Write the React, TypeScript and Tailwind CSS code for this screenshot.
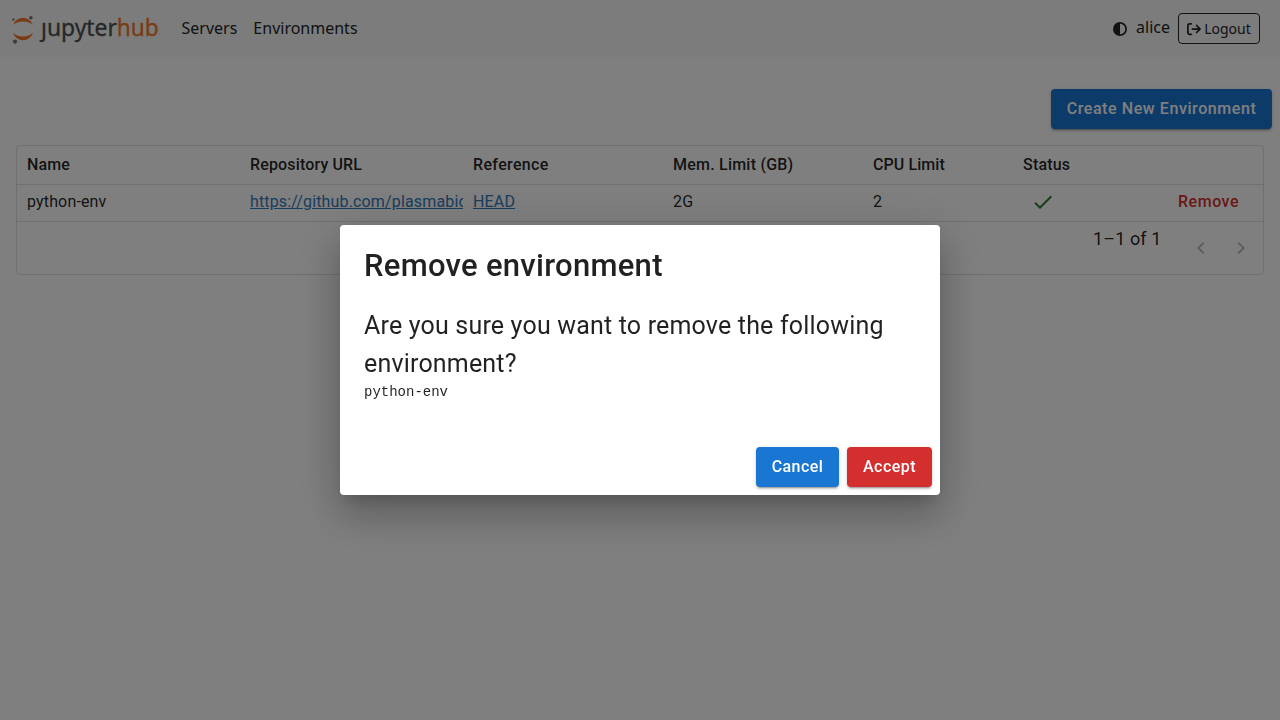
import { FaArrowRightFromBracket, FaCircleHalfStroke } from "react-icons/fa6";

const columns = "grid grid-cols-[223px_223px_200px_200px_150px_1fr]";
const buttonBase =
  "flex h-10 items-center justify-center rounded-[4px] text-base font-medium text-white shadow-[0_3px_1px_-2px_rgba(0,0,0,0.2),0_2px_2px_0_rgba(0,0,0,0.14),0_1px_5px_0_rgba(0,0,0,0.12)]";

function Logo() {
  return (
    <svg className="overflow-visible" width="148" height="33" viewBox="0 0 148 33" role="img" aria-label="jupyterhub">
      <path d="M2 13C3.800 8.600 7.500 6 12 6s8.200 2.600 10 7C19.800 10.700 16.200 9.500 12 9.500S4.200 10.700 2 13Z" fill="#f37726" />
      <path d="M2 20.800C3.800 25.500 7.500 28.200 12 28.200s8.200-2.700 10-7.400C19.800 23.200 16.200 24.500 12 24.500S4.200 23.200 2 20.800Z" fill="#f37726" />
      <circle cx="19.900" cy="5.700" r="1.800" fill="#767677" />
      <circle cx="2.400" cy="7.600" r="1.200" fill="#767677" />
      <circle cx="4" cy="29.600" r="2.100" fill="#767677" />
      <g fontFamily="'Noto Sans', sans-serif" fontSize="23">
        <text x="30" y="23.500" textLength="76" lengthAdjust="spacingAndGlyphs" fill="#4e4e4e" stroke="#4e4e4e" strokeWidth="0.300">
          ȷupyter
        </text>
        <text x="105.800" y="23.500" textLength="42" lengthAdjust="spacingAndGlyphs" fill="#f37726" stroke="#f37726" strokeWidth="0.300">
          hub
        </text>
      </g>
    </svg>
  );
}

function Navbar() {
  return (
    <header className="flex h-[57px] items-center bg-[#f8f9fa] pr-5 pl-[11px] font-['Noto_Sans',sans-serif] text-base text-[#212529]">
      <Logo />
      <nav className="mb-0.5 ml-[22.500px] flex gap-4">
        <a>Servers</a>
        <a>Environments</a>
      </nav>
      <div className="ml-auto flex items-center">
        <FaCircleHalfStroke className="size-3.5" />
        <span className="mr-2 mb-[3px] ml-[9px]">alice</span>
        <button className="flex h-[31px] w-[82px] items-center justify-center gap-[3px] rounded-[4px] border border-[#212529] text-sm">
          <FaArrowRightFromBracket className="size-3.5" />
          Logout
        </button>
      </div>
    </header>
  );
}

function Chevron({ d }: { d: string }) {
  return (
    <svg className="size-6 fill-black/26" viewBox="0 0 24 24">
      <path d={d} />
    </svg>
  );
}

function EnvironmentTable() {
  return (
    <section className="mx-4 mt-4 h-[130px] rounded-[4px] border border-[#e0e0e0] tracking-[0.150px]">
      <div className={`${columns} h-[39px] items-center border-b border-[#e0e0e0] font-medium`}>
        <div className="px-2.5">Name</div>
        <div className="px-2.5">Repository URL</div>
        <div className="px-2.5 tracking-[0.350px]">Reference</div>
        <div className="px-2.5 tracking-[0.220px]">Mem. Limit (GB)</div>
        <div className="px-2.5 tracking-[0.080px]">CPU Limit</div>
        <div className="px-2.5 tracking-[0.200px]">Status</div>
      </div>
      <div className={`${columns} h-[37px] items-center border-b border-[#e0e0e0] pb-0.5`}>
        <div className="px-2.5">python-env</div>
        <div className="ml-2.5 overflow-hidden whitespace-nowrap text-[#337ab7] underline">
          https://github.com/plasmabio
        </div>
        <div className="px-2.5 text-[#337ab7] underline">HEAD</div>
        <div className="px-2.5">2G</div>
        <div className="px-2.5">2</div>
        <div className="flex items-center justify-between pr-6 pl-[18px]">
          <svg className="size-6 fill-[#2e7d32]" viewBox="0 0 24 24">
            <path d="M9 16.170 4.830 12l-1.420 1.410L9 19 21 7l-1.410-1.410z" />
          </svg>
          <span className="font-medium tracking-[0.500px] text-[#d32f2f]">Remove</span>
        </div>
      </div>
      <div className="flex h-[52px] items-center justify-end pr-2.5">
        <span className="mb-[18px] text-lg tracking-[0.100px]">1–1 of 1</span>
        <div className="ml-[27.500px] flex gap-4">
          <Chevron d="M15.410 16.590 10.830 12l4.580-4.590L14 6l-6 6 6 6z" />
          <Chevron d="M8.590 16.590 13.170 12 8.590 7.410 10 6l6 6-6 6z" />
        </div>
      </div>
    </section>
  );
}

function RemoveDialog() {
  return (
    <div className="fixed inset-0 flex items-center justify-center bg-black/50">
      <div
        role="dialog"
        className="flex h-[270px] w-[600px] flex-col rounded-[4px] bg-white shadow-[0_11px_15px_-7px_rgba(0,0,0,0.2),0_24px_38px_3px_rgba(0,0,0,0.14),0_9px_46px_8px_rgba(0,0,0,0.12)]"
      >
        <h2 className="px-6 pt-4 text-[31px] leading-[50px] font-medium tracking-[0.280px]">Remove environment</h2>
        <div className="px-6 pt-4">
          <p className="text-[25px] leading-[38px] tracking-[0.180px]">
            Are you sure you want to remove the following environment?
          </p>
          <pre className="-mt-px font-['Liberation_Mono',monospace] text-sm leading-[21px] tracking-normal">python-env</pre>
        </div>
        <div className="mt-auto flex justify-end gap-2 p-2">
          <button className={`${buttonBase} w-[83px] bg-[#1976d2] tracking-[0.460px]`}>Cancel</button>
          <button className={`${buttonBase} w-[85px] bg-[#d32f2f] tracking-[0.460px]`}>Accept</button>
        </div>
      </div>
    </div>
  );
}

export default function App() {
  return (
    <div className="min-h-screen bg-white font-[Roboto,sans-serif] text-base text-black/87">
      <Navbar />
      <main>
        <div className="flex justify-end pt-8 pr-2">
          <button className={`${buttonBase} w-[221px] bg-[#1976d2] tracking-[0.580px]`}>Create New Environment</button>
        </div>
        <EnvironmentTable />
      </main>
      <RemoveDialog />
    </div>
  );
}
